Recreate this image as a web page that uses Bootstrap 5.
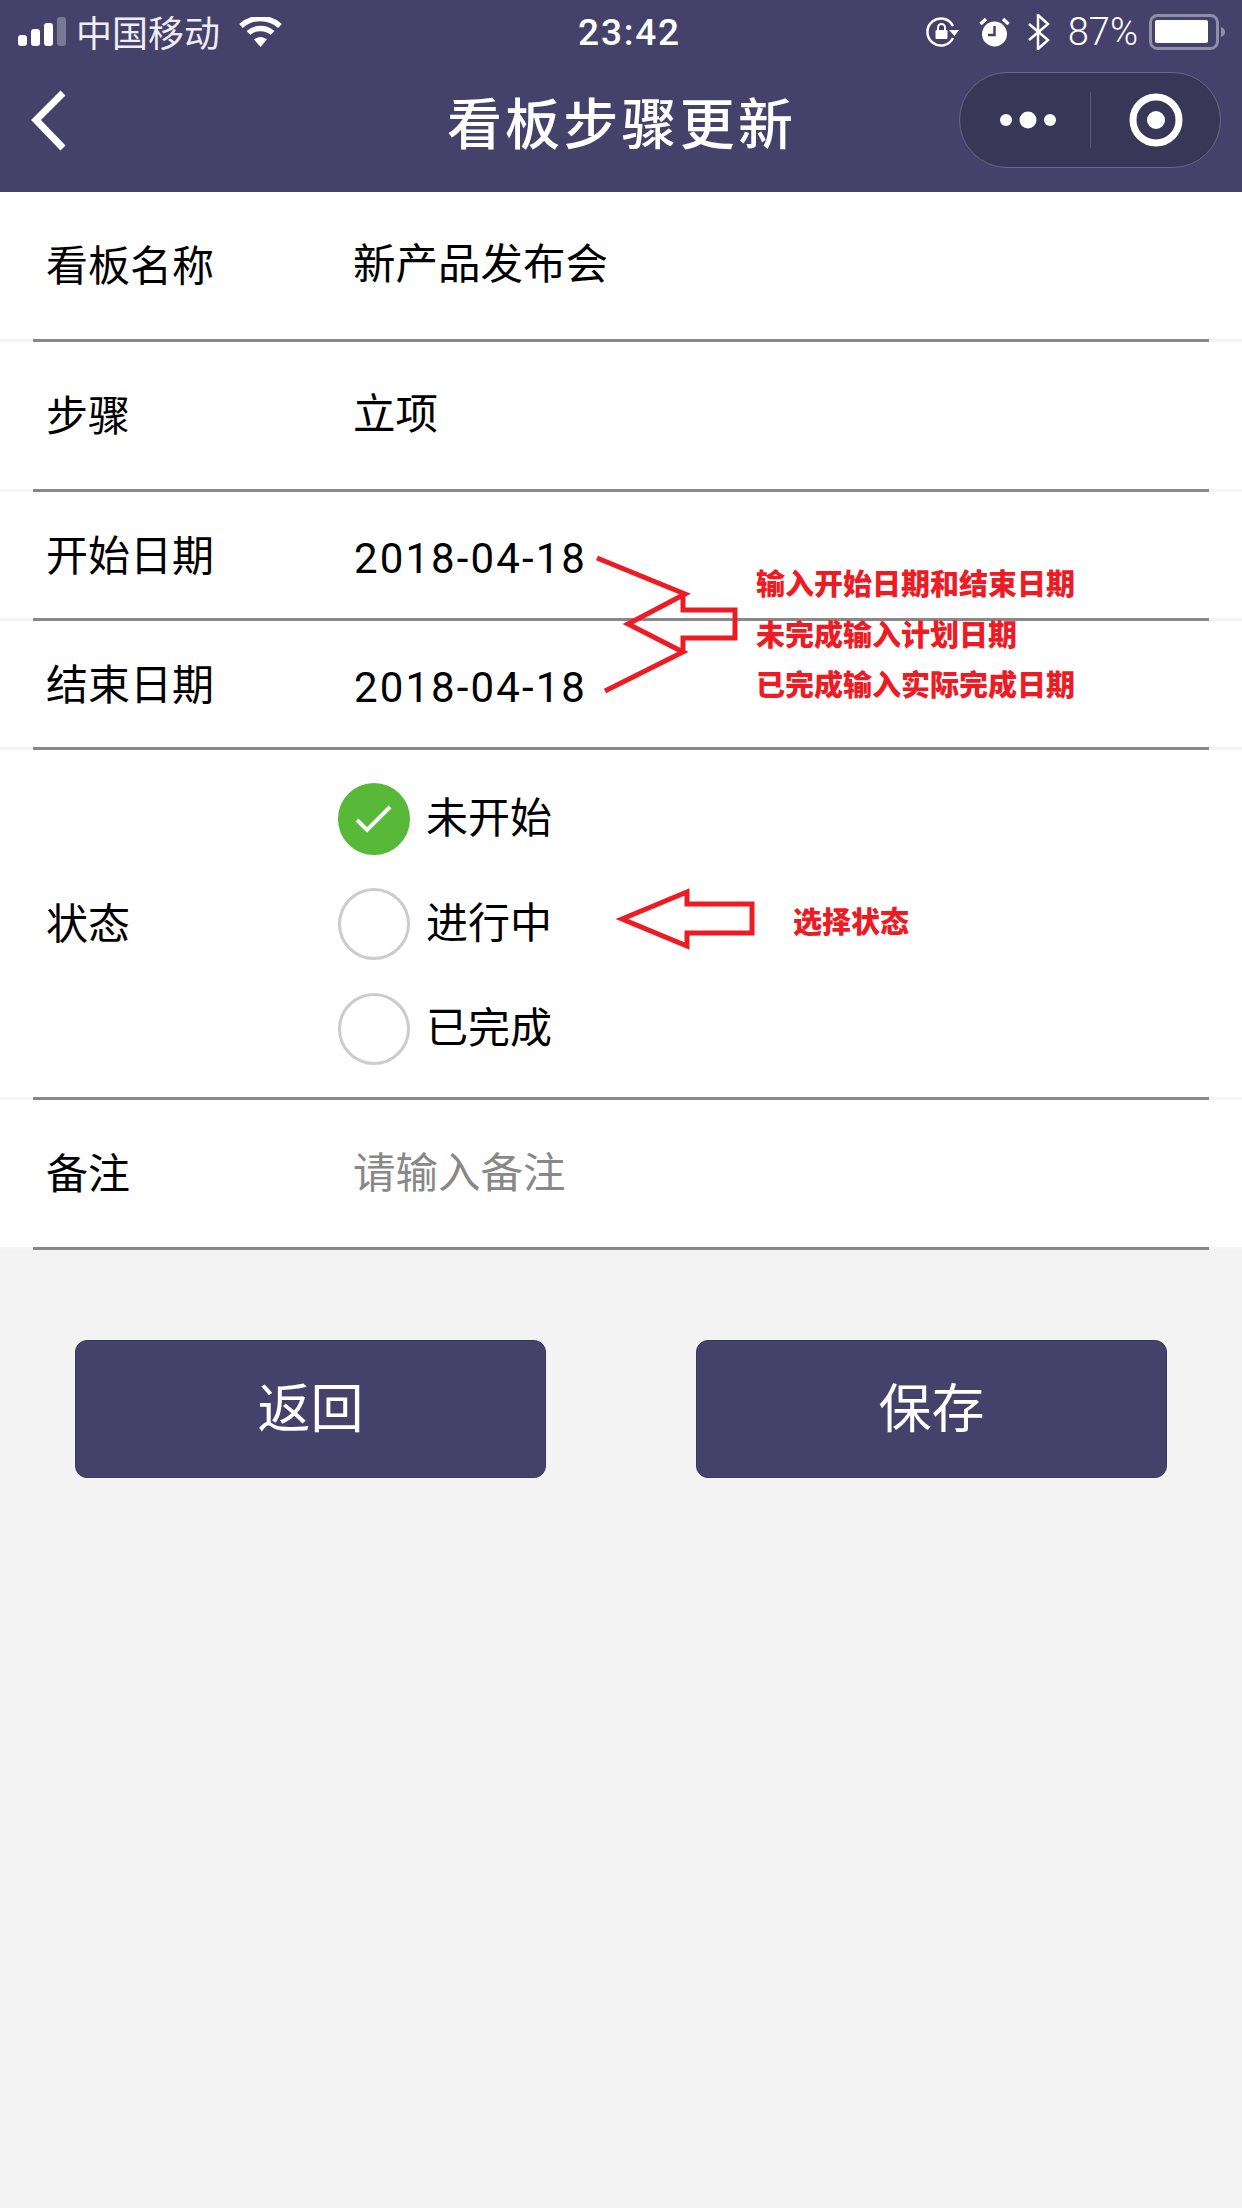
<!DOCTYPE html>
<html lang="zh-CN">
<head>
  <meta charset="UTF-8">
  <meta name="viewport" content="width=device-width, initial-scale=1">
  <title>看板步骤更新</title>
  <link href="https://cdn.jsdelivr.net/npm/bootstrap@5.3.0/dist/css/bootstrap.min.css" rel="stylesheet">
  <style>
    body { background-color: #f3f3f3; font-family: "Noto Sans CJK SC", "Liberation Sans", sans-serif; color: #000; min-height: 2208px; }
    .page-head { background-color: #44426a; height: 192px; color: #fff; }
    .status-bar { height: 60px; display: grid; grid-template-columns: 1fr auto 1fr; padding: 0 15px 0 18px; font-size: 36px; }
    .carrier { margin: 0 19px 0 9px; line-height: 58px; padding-bottom: 2px; color: #eeeef2; }
    .clock { font-family: Roboto, sans-serif; font-weight: 500; font-size: 37px; line-height: 60px; letter-spacing: 1.8px; padding-top: 3px; margin-left: 14px; }
    .percent { font-family: Roboto, sans-serif; font-weight: 300; font-size: 38px; line-height: 60px; margin: 0 11px 0 18px; }
    .icon-gap { margin-left: 19px; }
    .icon-gap-sm { margin-left: 17px; }
    .title-bar { height: 132px; display: grid; grid-template-columns: 1fr auto 1fr; padding: 0 21px 0 30px; }
    .title-text { font-size: 55px; line-height: 72px; letter-spacing: 3.2px; margin: 0 0 0 -8px; font-weight: 500; padding-bottom: 12px; }
    .back-arrow { display: block; margin-top: -14px; }
    .capsule { width: 262px; height: 96px; margin-top: 12px; border: 1px solid #6a6885; border-radius: 48px; background: #393757; }
    .form-area { position: relative; }
    .form-line { background: #fff; border-bottom: 3px solid #f5f5f5; font-size: 42px; }
    .form-line-in { margin: 0 33px -3px 33px; padding-left: 13px; border-bottom: 3px solid #888; }
    .h-a { height: 150px; }
    .h-b { height: 129px; }
    .h-c { height: 350px; }
    .field-name { width: 308px; padding-bottom: 6px; }
    .field-val { font-size: 42.5px; padding-bottom: 9px; margin-left: -1px; }
    .field-date { letter-spacing: 2.1px; font-family: Roboto, sans-serif; padding-top: 6px; }
    .field-hint { color: #888; font-size: 42.5px; padding-bottom: 7px; margin-left: -1px; }
    .radio-col { margin-left: -16px; gap: 33px; }
    .radio-dot { width: 72px; height: 72px; border-radius: 50%; border: 3px solid #ccc; margin-right: 16px; background: #fff; }
    .radio-dot.on { background: #58b837; border-color: #58b837; }
    .radio-txt { line-height: 64px; padding-bottom: 8px; }
    .btn-area { padding: 90px 75px 0 75px; }
    .btn-plum { width: 471px; height: 138px; background: #44426a; color: #fff; font-size: 53px; line-height: 60px; padding: 0 0 8px; border: 1px solid #3a3860; border-radius: 12px; }
    .btn-plum:hover { background: #44426a; color: #fff; }
    .mark-layer { position: absolute; left: 0; top: 0; pointer-events: none; }
    .note { position: absolute; color: #ed1c24; font-size: 29px; font-weight: 900; line-height: 36px; white-space: nowrap; }
    .note-a { left: 756px; top: 372px; }
    .note-b { left: 756px; top: 423px; }
    .note-c { left: 756px; top: 473px; }
    .note-d { left: 793px; top: 710px; }
  </style>
</head>
<body>

<div class="page-head">
  <div class="status-bar">
    <div class="d-flex align-items-center">
      <svg class="d-block" width="49" height="30" viewBox="0 0 49 30">
        <rect x="0" y="18" width="9" height="11" rx="3" fill="#fff"/>
        <rect x="13" y="12" width="9" height="17" rx="3" fill="#fff"/>
        <rect x="26" y="6" width="9" height="23" rx="3" fill="#fff"/>
        <rect x="39" y="0" width="9" height="29" rx="3" fill="#7a7993"/>
      </svg>
      <span class="carrier">中国移动</span>
      <svg class="d-block" width="43" height="30" viewBox="0 0 43 30">
        <path d="M2 9 C13 -1 30 -1 41 9" fill="none" stroke="#fff" stroke-width="5.5"/>
        <path d="M9.500 16 C16 10 27 10 33.500 16" fill="none" stroke="#fff" stroke-width="5.5"/>
        <path d="M15 22.500 C19 19 24 19 28 22.500 L21.500 30 Z" fill="#fff"/>
      </svg>
    </div>
    <div class="clock">23:42</div>
    <div class="d-flex align-items-center justify-content-end">
      <svg width="35" height="30" viewBox="0 0 35 30">
        <path d="M28 21 A13.500 13.500 0 1 1 28 9" fill="none" stroke="#fff" stroke-width="2.500"/>
        <path d="M24 13 L34 13 L29.500 19 Z" fill="#fff"/>
        <rect x="10.500" y="13" width="12" height="9" rx="1" fill="#fff"/>
        <path d="M13 13 V10.500 A3.500 3.500 0 0 1 20 10.500 V13" fill="none" stroke="#fff" stroke-width="2"/>
      </svg>
      <svg class="icon-gap" width="31" height="30" viewBox="0 0 31 30">
        <circle cx="15.500" cy="17" r="12.500" fill="#fff"/>
        <path d="M15.500 9 V18 H9" fill="none" stroke="#44426a" stroke-width="2.500"/>
        <path d="M1.500 7 L7 2 M29.500 7 L24 2" stroke="#fff" stroke-width="3.500"/>
      </svg>
      <svg class="icon-gap-sm" width="23" height="36" viewBox="0 0 23 36">
        <path d="M2 10 L21 26 L11 35 V1 L21 10 L2 26" fill="none" stroke="#fff" stroke-width="2.500"/>
      </svg>
      <span class="percent">87%</span>
      <svg width="78" height="36" viewBox="0 0 78 36">
        <rect x="1.500" y="1.500" width="67" height="33" rx="7" fill="none" stroke="#8f8ea6" stroke-width="3"/>
        <rect x="6" y="6" width="53" height="23" rx="2" fill="#fff"/>
        <path d="M72 13 C75 14 76 16 76 18 C76 20 75 22 72 23 Z" fill="#8f8ea6"/>
      </svg>
    </div>
  </div>
  <div class="title-bar align-items-center">
    <div>
      <svg class="back-arrow" width="40" height="64" viewBox="0 0 40 64">
        <path d="M33 6 L6 33 L33 61" fill="none" stroke="#fff" stroke-width="7"/>
      </svg>
    </div>
    <h1 class="title-text">看板步骤更新</h1>
    <div class="d-flex justify-content-end align-self-start">
      <div class="capsule">
        <svg class="d-block" width="260" height="94" viewBox="0 0 260 94">
          <circle cx="46" cy="47" r="6" fill="#fff"/>
          <circle cx="68" cy="47" r="8.500" fill="#fff"/>
          <circle cx="90" cy="47" r="6" fill="#fff"/>
          <path d="M130.500 19 V75" stroke="#5b5977" stroke-width="1"/>
          <circle cx="196" cy="47" r="23" fill="none" stroke="#fff" stroke-width="7"/>
          <circle cx="196" cy="47" r="9" fill="#fff"/>
        </svg>
      </div>
    </div>
  </div>
</div>

<div class="form-area">
  <div class="form-line">
    <div class="form-line-in h-a d-flex align-items-center">
      <div class="field-name">看板名称</div>
      <div class="field-val">新产品发布会</div>
    </div>
  </div>
  <div class="form-line">
    <div class="form-line-in h-a d-flex align-items-center">
      <div class="field-name">步骤</div>
      <div class="field-val">立项</div>
    </div>
  </div>
  <div class="form-line">
    <div class="form-line-in h-b d-flex align-items-center">
      <div class="field-name">开始日期</div>
      <div class="field-date">2018-04-18</div>
    </div>
  </div>
  <div class="form-line">
    <div class="form-line-in h-b d-flex align-items-center">
      <div class="field-name">结束日期</div>
      <div class="field-date">2018-04-18</div>
    </div>
  </div>
  <div class="form-line">
    <div class="form-line-in h-c d-flex align-items-center">
      <div class="field-name">状态</div>
      <div class="radio-col d-flex flex-column">
        <div class="d-flex align-items-center">
          <span class="radio-dot on d-flex align-items-center justify-content-center">
            <svg width="38" height="28" viewBox="0 0 38 28"><path d="M2 15 L12 25 L35 2" fill="none" stroke="#fff" stroke-width="4"/></svg>
          </span>
          <span class="radio-txt">未开始</span>
        </div>
        <div class="d-flex align-items-center">
          <span class="radio-dot"></span>
          <span class="radio-txt">进行中</span>
        </div>
        <div class="d-flex align-items-center">
          <span class="radio-dot"></span>
          <span class="radio-txt">已完成</span>
        </div>
      </div>
    </div>
  </div>
  <div class="form-line">
    <div class="form-line-in h-a d-flex align-items-center">
      <div class="field-name">备注</div>
      <div class="field-hint">请输入备注</div>
    </div>
  </div>

  <svg class="mark-layer" width="1242" height="1100" viewBox="0 192 1242 1100">
    <g fill="none" stroke="#ed1c24" stroke-width="5">
      <path d="M597 558 L685 594 L628 624 L683 652 L605 691"/>
      <path d="M683 595 V610 H735 V638 H683 V652"/>
      <path d="M622 919 L687 892 V904 H752 V933 H687 V946 Z"/>
    </g>
  </svg>
  <div class="note note-a">输入开始日期和结束日期</div>
  <div class="note note-b">未完成输入计划日期</div>
  <div class="note note-c">已完成输入实际完成日期</div>
  <div class="note note-d">选择状态</div>
</div>

<div class="btn-area d-flex justify-content-between">
  <button type="button" class="btn btn-plum">返回</button>
  <button type="button" class="btn btn-plum">保存</button>
</div>

<script src="https://cdn.jsdelivr.net/npm/bootstrap@5.3.0/dist/js/bootstrap.bundle.min.js"></script>
</body>
</html>
